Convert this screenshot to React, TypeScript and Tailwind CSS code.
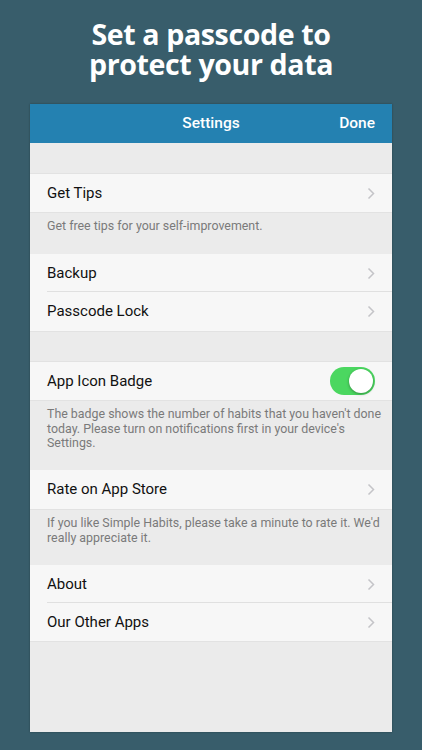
import React from "react";

const Chevron = () => (
  <svg width="8" height="13" viewBox="0 0 8 13" className="shrink-0">
    <path d="M1.5 1.5 L6.5 6.5 L1.5 11.5" fill="none" stroke="#c4c4c8" strokeWidth="1.5" />
  </svg>
);

const Row = ({ label, sep = false, toggle = false, h }: { label: string; sep?: boolean; toggle?: boolean; h: string }) => (
  <div className={`relative flex items-center bg-[#f7f7f7] pl-[17px] pr-[17px] ${h}`}>
    <span className="flex-1 text-[15px] text-[#111]">{label}</span>
    {toggle ? (
      <div className="flex h-[28px] w-[45px] items-center justify-end rounded-full bg-[#4bd760] pr-[2px]">
        <div className="h-[24px] w-[24px] rounded-full bg-white shadow-[0_1px_3px_rgba(0,0,0,0.35)]" />
      </div>
    ) : (
      <Chevron />
    )}
    {sep && <div className="absolute bottom-0 left-[17px] right-0 h-px bg-[#e0e0e0]" />}
  </div>
);

const Footer = ({ text, h }: { text: React.ReactNode; h: string }) => (
  <div className={`border-t border-[#e2e2e2] bg-[#ebebeb] pl-[17px] pr-[10px] pt-[6px] text-[12.4px] leading-[14.5px] text-[#7a7a7a] ${h}`}>
    {text}
  </div>
);

export default function App() {
  return (
    <div
      className="flex h-[750px] w-[422px] flex-col items-center bg-[#385d6b]"
      style={{ fontFamily: "Roboto, 'Liberation Sans', sans-serif" }}
    >
      <div
        className="pt-[19px] text-center text-[28.6px] font-bold leading-[30px] tracking-[-0.4px] text-white"
        style={{ fontFamily: "'Open Sans', 'Liberation Sans', sans-serif" }}
      >
        <div>Set a passcode to</div>
        <div>protect your data</div>
      </div>
      <div className="mt-[25px] flex h-[628px] w-[362px] flex-col bg-[#ebebeb] shadow-[0_0_2px_rgba(0,0,0,0.3)]">
        <div className="relative flex h-[39px] shrink-0 items-center justify-center bg-[#2481b1]">
          <span className="text-[15.5px] font-medium text-white">Settings</span>
          <span className="absolute right-[17px] text-[15.5px] font-medium text-white">Done</span>
        </div>
        <div className="h-[31px] shrink-0 border-b border-[#e2e2e2]" />
        <Row label="Get Tips" h="h-[38px]" />
        <Footer h="h-[42px]" text="Get free tips for your self-improvement." />
        <Row label="Backup" sep h="h-[38px]" />
        <Row label="Passcode Lock" h="h-[39px]" />
        <div className="h-[31px] shrink-0 border-y border-[#e2e2e2]" />
        <Row label="App Icon Badge" toggle h="h-[38px]" />
        <Footer
          h="h-[70px]"
          text="The badge shows the number of habits that you haven't done today. Please turn on notifications first in your device's Settings."
        />
        <Row label="Rate on App Store" h="h-[39px]" />
        <Footer
          h="h-[56px]"
          text="If you like Simple Habits, please take a minute to rate it. We'd really appreciate it."
        />
        <Row label="About" sep h="h-[38px]" />
        <Row label="Our Other Apps" h="h-[38px]" />
        <div className="flex-1 border-t border-[#e2e2e2]" />
      </div>
    </div>
  );
}
